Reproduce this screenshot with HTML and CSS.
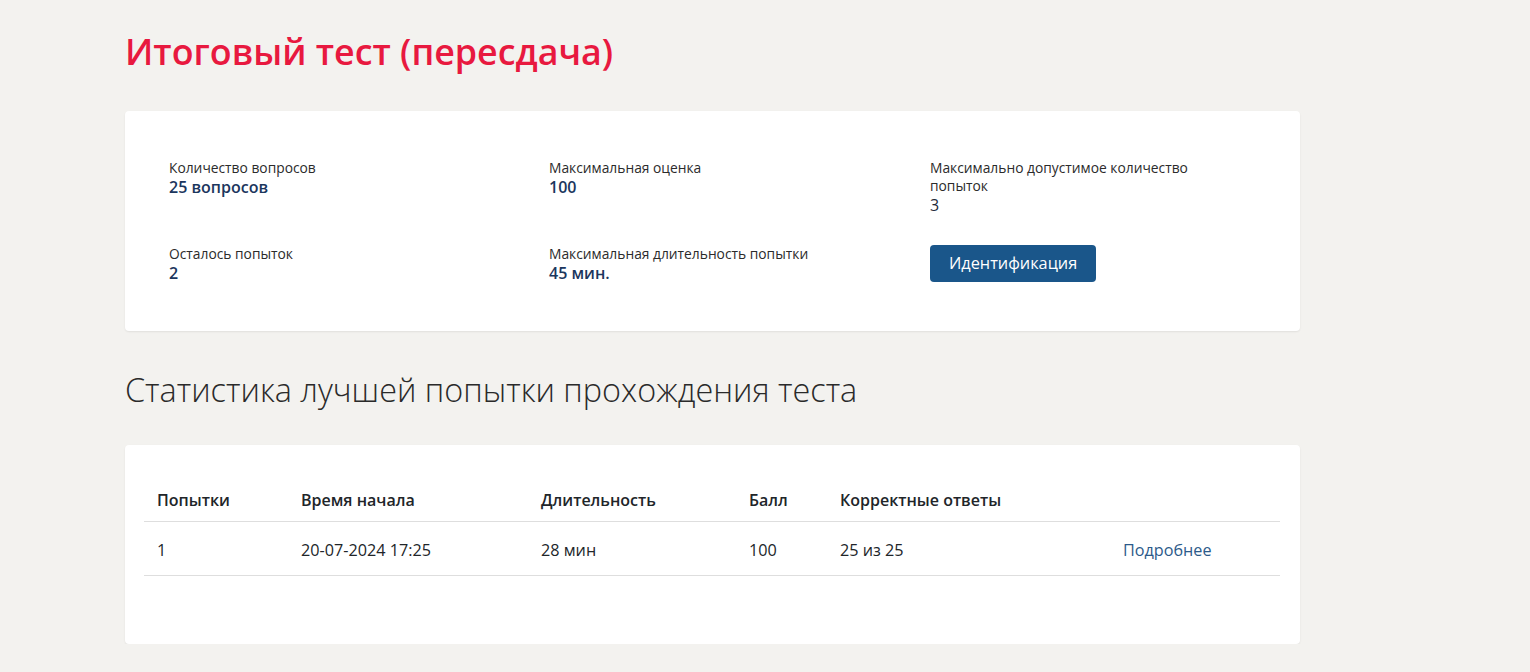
FILE: index.html
```html
<!DOCTYPE html>
<html lang="ru">
<head>
<meta charset="utf-8">
<title>Итоговый тест (пересдача)</title>
<link rel="stylesheet" href="styles.css">
</head>
<body>
<main class="page">
  <h1 class="title">Итоговый тест (пересдача)</h1>

  <section class="card info">
    <div class="info-grid">
      <div class="item">
        <div class="label">Количество вопросов</div>
        <div class="value">25 вопросов</div>
      </div>
      <div class="item">
        <div class="label">Максимальная оценка</div>
        <div class="value">100</div>
      </div>
      <div class="item">
        <div class="label">Максимально допустимое количество попыток</div>
        <div class="value plain">3</div>
      </div>
      <div class="item">
        <div class="label">Осталось попыток</div>
        <div class="value">2</div>
      </div>
      <div class="item">
        <div class="label">Максимальная длительность попытки</div>
        <div class="value">45 мин.</div>
      </div>
      <div class="item">
        <button class="btn" type="button">Идентификация</button>
      </div>
    </div>
  </section>

  <h2 class="subtitle">Статистика лучшей попытки прохождения теста</h2>

  <section class="card stats">
    <table class="table">
      <colgroup>
        <col class="c1"><col class="c2"><col class="c3"><col class="c4"><col class="c5"><col class="c6">
      </colgroup>
      <thead>
        <tr>
          <th>Попытки</th>
          <th>Время начала</th>
          <th>Длительность</th>
          <th>Балл</th>
          <th>Корректные ответы</th>
          <th></th>
        </tr>
      </thead>
      <tbody>
        <tr>
          <td>1</td>
          <td>20-07-2024 17:25</td>
          <td>28 мин</td>
          <td>100</td>
          <td>25 из 25</td>
          <td><a class="link" href="#">Подробнее</a></td>
        </tr>
      </tbody>
    </table>
  </section>
</main>
</body>
</html>
```

FILE: styles.css
```css
* { box-sizing: border-box; }

html, body {
  margin: 0;
  padding: 0;
  background: #f3f2ef;
  color: #212529;
  font-family: "Open Sans", "Noto Sans", "DejaVu Sans", sans-serif;
}

.page {
  width: 1175px;
  margin-left: 125px;
  padding-top: 27px;
}

.title {
  margin: 0;
  font-size: 35.8px;
  line-height: 48px;
  font-weight: 600;
  color: #e8193f;
  letter-spacing: 0;
}

.card {
  background: #ffffff;
  border-radius: 4px;
  box-shadow: 0 1px 2px rgba(0, 0, 0, 0.08);
}

.info {
  margin-top: 36px;
  padding: 48px 44px 48px 44px;
}

.info-grid {
  display: grid;
  grid-template-columns: 380px 381px 300px;
  row-gap: 30px;
}

.item {
  max-width: 290px;
}

.label {
  font-size: 13.8px;
  line-height: 18px;
  color: #2b2b2b;
}

.value {
  font-size: 16px;
  line-height: 20px;
  font-weight: 600;
  color: #1b365d;
}

.value.plain {
  font-weight: 400;
  color: #1f2a3a;
}

.btn {
  display: inline-block;
  height: 37px;
  padding: 0 19px;
  border: none;
  border-radius: 4px;
  background: #1a568a;
  color: #ffffff;
  font-family: inherit;
  font-size: 16.3px;
  line-height: 37px;
  cursor: pointer;
}

.subtitle {
  margin: 37px 0 0 0;
  font-size: 32.4px;
  line-height: 42px;
  font-weight: 300;
  color: #2a2a2a;
}

.stats {
  margin-top: 35px;
  padding: 30px 20px 68px 19px;
}

.table {
  width: 1136px;
  border-collapse: collapse;
  table-layout: fixed;
}

.c1 { width: 144px; }
.c2 { width: 240px; }
.c3 { width: 208px; }
.c4 { width: 91px; }
.c5 { width: 283px; }
.c6 { width: 170px; }

.table th {
  text-align: left;
  font-size: 16px;
  font-weight: 600;
  color: #212529;
  padding: 14px 13px 10px 13px;
  line-height: 22px;
  border-bottom: 1px solid #dedede;
}

.table td {
  text-align: left;
  font-size: 16.2px;
  font-weight: 400;
  color: #212529;
  padding: 17px 13px 14px 13px;
  line-height: 22px;
  border-bottom: 1px solid #dedede;
}

.link {
  color: #2c5a8a;
  text-decoration: none;
}
```
